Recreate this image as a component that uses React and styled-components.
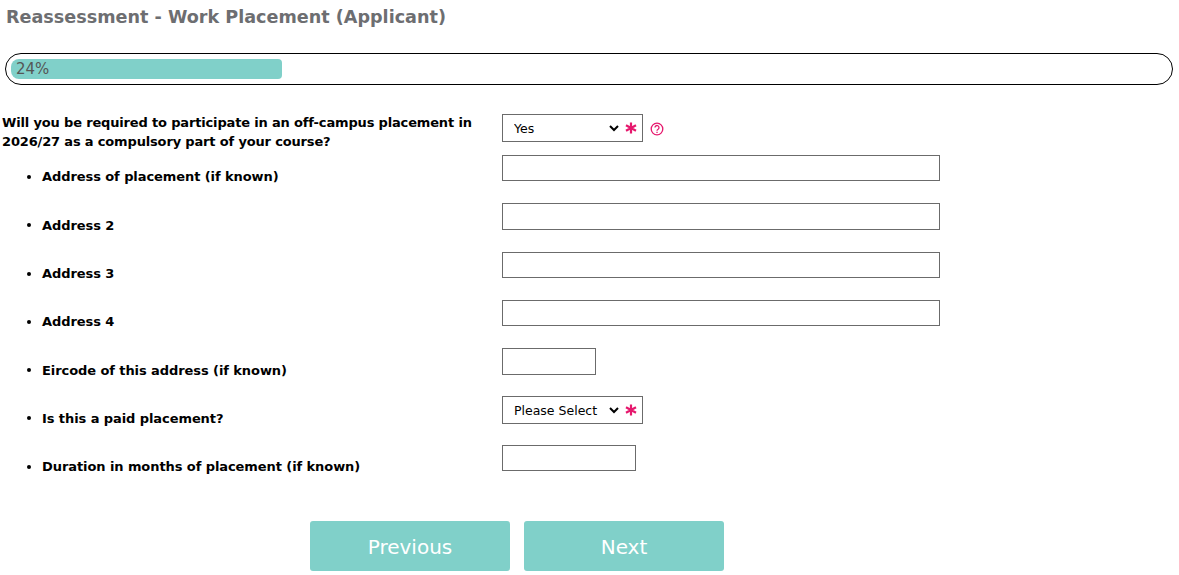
import React from 'react'
import styled, { createGlobalStyle } from 'styled-components'

const GlobalStyle = createGlobalStyle`
	html, body {
		margin: 0;
		padding: 0;
		background: #fff;
		font-family: "DejaVu Sans", Verdana, sans-serif;
	}
`

const Page = styled.div`
	width: 1179px;
	height: 575px;
	overflow: hidden;
`

const Title = styled.h1`
	margin: 0;
	padding: 6px 0 0 6px;
	height: 53px;
	box-sizing: border-box;
	font-size: 17.6px;
	line-height: 22px;
	font-weight: bold;
	color: #6d6e71;
`

const Progress = styled.div`
	box-sizing: border-box;
	width: 1168px;
	height: 32px;
	margin-left: 5px;
	padding: 5px;
	border: 1px solid #000;
	border-radius: 16px;
`

const ProgressFill = styled.div`
	box-sizing: border-box;
	height: 20px;
	padding-left: 5px;
	background: #80d0c9;
	border-radius: 8px 4px 4px 8px;
	font-size: 15px;
	line-height: 20px;
	color: #555;
`

const Form = styled.form`
	display: grid;
	grid-template-columns: 502px 1fr;
	padding-top: 29px;
`

const Question = styled.div`
	display: flex;
	align-items: flex-start;
	min-height: ${p => p.$tall ? '41px' : '48.3px'};
	font-size: 13px;
	line-height: 19px;
	font-weight: bold;
	color: #000;
`

const QuestionText = styled.span`
	margin-top: -1px;
	padding-left: 2px;
	width: 480px;
	letter-spacing: -0.16px;
`

const ItemText = styled.span`
	position: relative;
	padding: 12.4px 0 0 42px;
	letter-spacing: -0.08px;

	&::before {
		content: '';
		position: absolute;
		left: 27px;
		top: 20px;
		width: 4px;
		height: 4px;
		border-radius: 50%;
		background: #000;
	}
`

const Field = styled.div`
	display: flex;
	align-items: flex-start;
	color: #e6186d;
`

const TextBox = styled.input`
	box-sizing: border-box;
	width: ${p => p.$width}px;
	height: 26.4px;
	margin: 0;
	padding: 0 4px;
	border: 1px solid #6b6b6b;
	border-radius: 0;
	background: #fff;
`

const Select = styled.select`
	box-sizing: border-box;
	width: ${p => p.$width}px;
	height: 28px;
	margin: 0;
	padding: 0 0 0 7px;
	border: 1px solid #6b6b6b;
	border-right: none;
	border-radius: 0;
	background: #fff;
	color: #000;
	font-family: "DejaVu Sans", Verdana, sans-serif;
	font-size: 12.5px;
	outline: none;
`

const Required = styled.span`
	box-sizing: border-box;
	display: flex;
	align-items: center;
	justify-content: center;
	width: 21px;
	height: 28px;
	padding-right: 3px;
	border: 1px solid #6b6b6b;
	border-left: none;
	background: #fff;
`

const HelpIcon = styled.svg`
	width: 14px;
	height: 14px;
	margin: 8px 0 0 7px;
`

const Buttons = styled.div`
	display: flex;
	gap: 14px;
	grid-column: 1 / -1;
	padding: 28px 0 0 310px;
`

const NavButton = styled.button`
	width: 200px;
	height: 50px;
	padding: 2px 0 0;
	border: none;
	border-radius: 3px;
	background: #80d0c9;
	color: #fff;
	font-family: "DejaVu Sans", Verdana, sans-serif;
	font-size: 20px;
`

function Asterisk() {
	return (
		<svg width="12" height="12" viewBox="0 0 12 12" fill="none" stroke="#e6186d" strokeWidth="2.2">
			<path d="M6 .5v11M1 3.2l10 5.6M11 3.2L1 8.8" />
		</svg>
	)
}

const rows = [
	{ label: 'Address of placement (if known)', width: 438 },
	{ label: 'Address 2', width: 438 },
	{ label: 'Address 3', width: 438 },
	{ label: 'Address 4', width: 438 },
	{ label: 'Eircode of this address (if known)', width: 94 },
	{ label: 'Is this a paid placement?', select: true },
	{ label: 'Duration in months of placement (if known)', width: 134 }
]

export default function App() {
	const progress = 24
	return (
		<Page>
			<GlobalStyle />
			<Title>Reassessment - Work Placement (Applicant)</Title>
			<Progress>
				<ProgressFill style={{ width: `${progress * 0.977}%` }}>{progress}%</ProgressFill>
			</Progress>
			<Form onSubmit={e => e.preventDefault()}>
				<Question $tall>
					<QuestionText>Will you be required to participate in an off-campus placement in 2026/27 as a compulsory part of your course?</QuestionText>
				</Question>
				<Field>
					<Select $width={120} defaultValue="Yes">
						<option>Please Select</option>
						<option>Yes</option>
						<option>No</option>
					</Select>
					<Required><Asterisk /></Required>
					<HelpIcon viewBox="0 0 14 14" fill="none" stroke="#e6186d">
						<circle cx="7" cy="7" r="5.8" strokeWidth="1.3" />
						<path d="M5 5.6a2 2 0 1 1 3.1 1.6c-.8.5-1.1.8-1.1 1.6" strokeWidth="1.3" />
						<path d="M7 9.8v1.2" strokeWidth="1.3" />
					</HelpIcon>
				</Field>
				{rows.map(row => (
					<React.Fragment key={row.label}>
						<Question>
							<ItemText>{row.label}</ItemText>
						</Question>
						<Field>
							{row.select
								? <>
									<Select $width={120} defaultValue="Please Select">
										<option>Please Select</option>
										<option>Yes</option>
										<option>No</option>
									</Select>
									<Required><Asterisk /></Required>
								</>
								: <TextBox $width={row.width} type="text" />}
						</Field>
					</React.Fragment>
				))}
				<Buttons>
					<NavButton type="button">Previous</NavButton>
					<NavButton type="button">Next</NavButton>
				</Buttons>
			</Form>
		</Page>
	)
}
